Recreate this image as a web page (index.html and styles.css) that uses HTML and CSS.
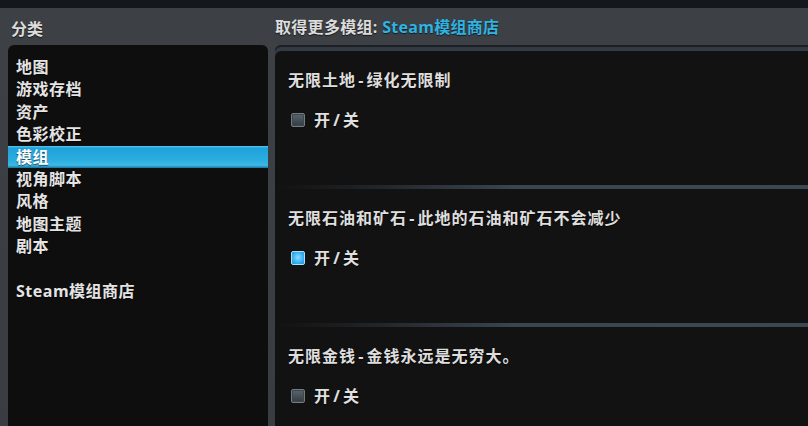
FILE: index.html
```html
<!DOCTYPE html>
<html lang="zh-CN">
<head>
<meta charset="utf-8">
<link rel="stylesheet" href="styles.css">
</head>
<body>
<div class="topbar"></div>
<div class="app">
  <div class="head head-left">分类</div>
  <div class="head head-right">取得更多模组: <span class="link">Steam模组商店</span></div>
  <ul class="list">
    <li>地图</li>
    <li>游戏存档</li>
    <li>资产</li>
    <li>色彩校正</li>
    <li class="sel">模组</li>
    <li>视角脚本</li>
    <li>风格</li>
    <li>地图主题</li>
    <li>剧本</li>
    <li class="blank"></li>
    <li>Steam模组商店</li>
  </ul>
  <div class="panel">
    <div class="mod">
      <div class="title">无限土地 - 绿化无限制</div>
      <div class="toggle"><span class="box"></span>开 / 关</div>
    </div>
    <div class="sep"></div>
    <div class="mod">
      <div class="title">无限石油和矿石 - 此地的石油和矿石不会减少</div>
      <div class="toggle"><span class="box on"></span>开 / 关</div>
    </div>
    <div class="sep"></div>
    <div class="mod">
      <div class="title">无限金钱 - 金钱永远是无穷大。</div>
      <div class="toggle"><span class="box"></span>开 / 关</div>
    </div>
  </div>
</div>
</body>
</html>
```
FILE: styles.css
```css
html, body {
  margin: 0;
  padding: 0;
  height: 100%;
  overflow: hidden;
}
body {
  background: #393c40;
  font-family: "Open Sans", "Noto Sans CJK SC", sans-serif;
  font-weight: 700;
  color: #e4e4e4;
  text-shadow: 0 1px 1px rgba(0,0,0,0.6);
}
.topbar {
  height: 8px;
  background: #14181c;
}
.app {
  display: grid;
  grid-template-columns: 260px 1fr;
  grid-template-rows: 37px 381px;
  column-gap: 7px;
  padding-left: 8px;
  background: linear-gradient(#3d4044, #393c40);
}
.head {
  font-size: 16px;
  line-height: 22px;
  color: #dcdcdc;
}
.head-left {
  padding: 10px 0 0 3px;
}
.head-right {
  padding: 8px 0 0 0;
  letter-spacing: 0.3px;
}
.link {
  color: #2fb4e2;
}
.list {
  margin: 0;
  padding: 11px 0 0 0;
  list-style: none;
  background: #0e0e0f;
  border-radius: 6px 6px 0 0;
  font-size: 16px;
  line-height: 22.4px;
  letter-spacing: 0.5px;
  overflow: hidden;
  min-height: 0;
}
.list li {
  padding-left: 8px;
  height: 22.4px;
}
.list li.sel {
  background: linear-gradient(#5cc9f0 0, #1fa2d9 2px, #2aacdf 60%, #3bb8e6 88%, #15739c 100%);
  color: #ffffff;
}
.panel {
  background: #121212;
  border-radius: 6px 0 0 0;
  padding-top: 6px;
  box-shadow: inset 0 2px 0 #1c2024, inset 0 6px 0 #323b44;
  overflow: hidden;
  min-height: 0;
}
.mod {
  height: 116px;
  padding: 18px 0 0 13px;
}
.title {
  font-size: 16px;
  line-height: 22px;
  letter-spacing: 1px;
  word-spacing: -3px;
  color: #dedede;
}
.toggle {
  margin-top: 18px;
  padding-left: 3px;
  display: flex;
  align-items: center;
  gap: 9px;
  font-size: 16px;
  line-height: 22px;
  letter-spacing: 0.5px;
  word-spacing: -2px;
  color: #e0e0e0;
}
.box {
  width: 12px;
  height: 12px;
  border: 1px solid #737c82;
  border-radius: 2px;
  background: linear-gradient(#5a656e, #333b41);
  box-shadow: inset 0 0 0 1px #3e464c;
}
.box.on {
  border-color: #a8e2fa;
  background: radial-gradient(circle at 50% 45%, #8fdcff 0, #3ab4f2 55%, #1e8fd8 100%);
  box-shadow: none;
}
.sep {
  height: 4px;
  background: linear-gradient(90deg, rgba(58,68,80,0) 0, rgba(58,68,80,0.2) 60px, #3a4550 240px, #3c4752 100%);
}
```
